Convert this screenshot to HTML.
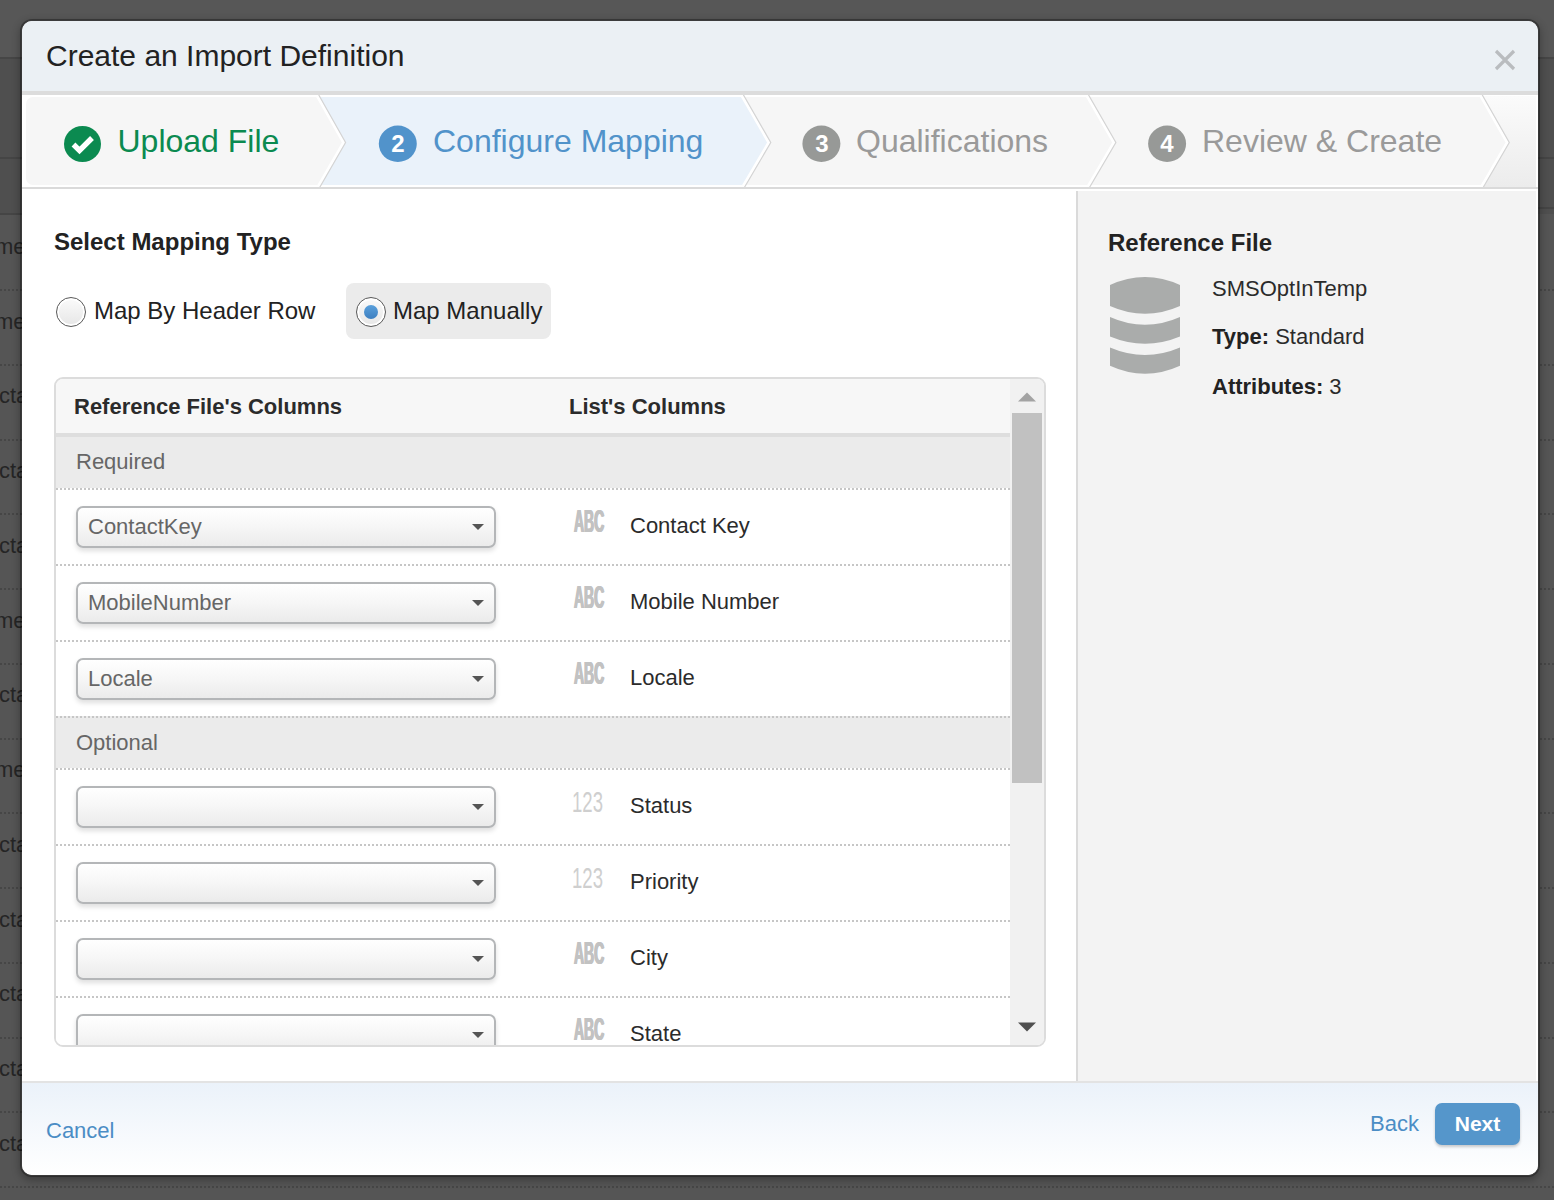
<!DOCTYPE html>
<html>
<head>
<meta charset="utf-8">
<title>Create an Import Definition</title>
<style>
*{box-sizing:border-box;margin:0;padding:0}
html,body{width:1554px;height:1200px;overflow:hidden}
body{background:#555555;font-family:"Liberation Sans",Arial,sans-serif;font-size:22px;color:#2b2b2b;position:relative}
.abs{position:absolute}
/* background page */
.bgband{position:absolute;left:0;width:1554px}
.bgline{position:absolute;left:0;width:1554px;height:0;border-top:2px dotted #464646}
.bgtxt{position:absolute;left:0;font-size:22px;color:#252525;line-height:30px;white-space:nowrap}
/* modal */
#modal{position:absolute;left:20px;top:19px;width:1520px;height:1158px;border:2px solid rgba(0,0,0,.3);border-radius:12px;background:#fff;background-clip:padding-box;box-shadow:0 3px 8px rgba(0,0,0,.3);overflow:hidden}
#hdr{position:absolute;left:0;top:0;width:1516px;height:74px;background:#ebf0f4;border-bottom:4px solid #dcdcdc}
#hdr h3{position:absolute;left:24px;top:17px;font-size:30px;font-weight:normal;line-height:36px;color:#222;white-space:nowrap}
#close{position:absolute;left:1471px;top:27px;width:24px;height:24px}
/* wizard */
#wiz{position:absolute;left:2px;top:76px;width:1512px;height:92px;background:#f6f6f6;border:2px solid #fff;border-radius:8px;overflow:hidden}
#wizline{position:absolute;left:0;top:166px;width:1516px;height:2px;background:#dcdcdc}
.step{position:absolute;top:100px;height:40px;font-size:32px;line-height:40px;white-space:nowrap}
.badge{position:absolute;width:38px;height:38px;border-radius:19px;color:#fff;font-weight:bold;font-size:24px;line-height:38px;text-align:center}
/* body */
#left{position:absolute;left:0;top:169px;width:1054px;height:891px;background:#fff}
#right{position:absolute;left:1054px;top:170px;width:460px;height:890px;background:#f3f3f3;border-left:2px solid #dadada}
h4{font-size:24px;font-weight:bold;color:#222;white-space:nowrap;position:absolute;line-height:28px}
/* footer */
#ftr{position:absolute;left:0;top:1060px;width:1516px;height:94px;background:linear-gradient(#ebf2fa,#ffffff);border-top:2px solid #e3e3e3}
a{color:#4b8dc5;text-decoration:none}

.pill{position:absolute;width:205px;height:56px;background:#ebebeb;border-radius:8px}
.radio{position:absolute;width:30px;height:30px;border-radius:15px;border:1.5px solid #5a5a5a;background:linear-gradient(#fbfbfb,#e6e6e6);box-shadow:inset 0 0 0 2px #fff}
.radio i{position:absolute;left:6.500px;top:6.500px;width:14px;height:14px;border-radius:7px;background:linear-gradient(#5aa0dc,#3d7fc0)}
.rl{position:absolute;font-size:24px;line-height:30px;color:#222;white-space:nowrap}
#grid{position:absolute;width:992px;height:670px;border:2px solid #dcdcdc;border-radius:9px;overflow:hidden;background:#fff}
#gin{position:absolute;left:0;top:0;width:988px;height:666px;overflow:hidden}
.ghead{position:absolute;left:0;top:0;width:954px;height:58px;background:#f7f7f7;border-bottom:4px solid #dedede;font-weight:bold;color:#2b2b2b}
.ghead span{position:absolute;top:13px;line-height:30px;white-space:nowrap}
.gsec{position:absolute;left:0;width:954px;background:#ebebeb;color:#666}
.gsec.opt{border-top:2px dotted #c6c6c6}
.gsec span{position:absolute;left:20px;top:10px;line-height:30px}
.gsec.opt span{top:10px}
.grow{position:absolute;left:0;width:954px;height:76px;border-top:2px dotted #c6c6c6;background:#fff}
.sel{position:absolute;left:20px;top:16px;width:420px;height:42px;border:2px solid #b4b6b8;border-radius:7px;background:linear-gradient(#ffffff,#f6f6f6 50%,#ebebeb);box-shadow:0 3px 5px rgba(0,0,0,.13);color:#666}
.sel span{position:absolute;left:10px;top:3.5px;line-height:30px;white-space:nowrap}
.sel i{position:absolute;left:394px;top:16px;width:0;height:0;border-left:6px solid transparent;border-right:6px solid transparent;border-top:6.500px solid #555}
.ic{position:absolute;left:518.2px;top:15.8px;font-size:31px;line-height:32px;font-weight:bold;color:#c2c2c2;text-shadow:1.2px 0 #c2c2c2,-1.2px 0 #c2c2c2;transform-origin:0 0;transform:scaleX(.45);white-space:nowrap}
.ic.num{font-weight:normal;color:#cfcfcf;text-shadow:none;font-size:29px;left:516px;top:15.6px;transform:scaleX(.64)}
.nm{position:absolute;left:574px;top:21px;line-height:30px;white-space:nowrap;color:#2b2b2b}
.sbar{position:absolute;left:954px;top:0;width:34px;height:666px;background:#f1f1f1}
.thumb{position:absolute;left:2px;top:34px;width:30px;height:370px;background:#c1c1c1}
.rt{position:absolute;left:134px;line-height:30px;white-space:nowrap;color:#2b2b2b}
.rt b{color:#222}
#next{position:absolute;width:85px;height:42px;border-radius:7px;background:#5596cb;color:#fff;font-weight:bold;font-size:21px;text-align:center;line-height:42px;box-shadow:0 2px 3px rgba(0,0,0,.2)}
</style>
</head>
<body>
<div class="bgband" style="top:0;height:57px;background:#575757"></div>
<div class="bgband" style="top:57px;height:157px;background:#4f4f4f"></div>
<div class="bgband" style="top:57px;height:2px;background:#464646"></div>
<div class="bgband" style="top:157px;height:2px;background:#454545"></div>
<div class="bgband" style="top:213px;height:2px;background:#454545;width:30px"></div>
<div class="bgband" style="top:207px;height:2px;background:#454545;left:1500px;width:54px"></div>
<div class="bgline" style="top:289.00px"></div>
<div class="bgline" style="top:363.75px"></div>
<div class="bgline" style="top:438.50px"></div>
<div class="bgline" style="top:513.25px"></div>
<div class="bgline" style="top:588.00px"></div>
<div class="bgline" style="top:662.75px"></div>
<div class="bgline" style="top:737.50px"></div>
<div class="bgline" style="top:812.25px"></div>
<div class="bgline" style="top:887.00px"></div>
<div class="bgline" style="top:961.75px"></div>
<div class="bgline" style="top:1036.50px"></div>
<div class="bgline" style="top:1111.25px"></div>
<div class="bgline" style="top:1186.00px"></div>
<div class="bgtxt" style="left:-5px;top:231.90px">me</div>
<div class="bgtxt" style="left:-5px;top:306.65px">me</div>
<div class="bgtxt" style="left:-1px;top:381.40px">cta</div>
<div class="bgtxt" style="left:-1px;top:456.15px">cta</div>
<div class="bgtxt" style="left:-1px;top:530.90px">cta</div>
<div class="bgtxt" style="left:-5px;top:605.65px">me</div>
<div class="bgtxt" style="left:-1px;top:680.40px">cta</div>
<div class="bgtxt" style="left:-5px;top:755.15px">me</div>
<div class="bgtxt" style="left:-1px;top:829.90px">cta</div>
<div class="bgtxt" style="left:-1px;top:904.65px">cta</div>
<div class="bgtxt" style="left:-1px;top:979.40px">cta</div>
<div class="bgtxt" style="left:-1px;top:1054.15px">cta</div>
<div class="bgtxt" style="left:-1px;top:1128.90px">cta</div>
<div id="modal">
  <div id="hdr"><h3>Create an Import Definition</h3>
    <svg id="close" viewBox="0 0 24 24"><path d="M3 3L21 21M21 3L3 21" stroke="#b9bcbf" stroke-width="3.2" fill="none"/></svg>
  </div>
  <svg class="abs" style="left:0;top:74px" width="1516" height="96" viewBox="0 0 1516 96">
    <defs><linearGradient id="gr" x1="0" y1="0" x2="0" y2="1"><stop offset="0" stop-color="#fbfbfb"/><stop offset="1" stop-color="#ececec"/></linearGradient>
    <clipPath id="cp"><rect x="0" y="0" width="1516" height="94"/></clipPath></defs>
    <rect x="0" y="0" width="1516" height="92" fill="#fff"/>
    <rect x="4" y="2" width="1510" height="88" rx="7" fill="#f6f6f6"/>
    <rect x="1440" y="1" width="74" height="91" fill="url(#gr)"/>
    <polygon points="1400,0 1459,0 1486,47.5 1459,92 1400,92" fill="#fff"/><polygon points="1400,2 1459,2 1486,47.5 1459,90 1400,90" fill="#f6f6f6"/>
    <polygon points="296,2 721,2 748,47.5 721,90 296,90 322.5,47.5" fill="#eaf2fa"/>
    <g clip-path="url(#cp)">
    <g fill="none" stroke="#d4d4d4" stroke-width="1.7">
      <polyline points="296.5,0 323.3,47.5 296.5,94"/>
      <polyline points="721.2,0 748.5,47.5 721.2,94"/>
      <polyline points="1066.3,0 1093.6,47.5 1066.3,94"/>
      <polyline points="1460.0,0 1487.0,47.5 1460.0,94"/>
    </g>
    <g fill="none" stroke="#ffffff" stroke-width="2.6">
      <polyline points="294.6,0 321.4,47.5 294.6,94"/>
      <polyline points="719.3,0 746.6,47.5 719.3,94"/>
      <polyline points="1064.4,0 1091.7,47.5 1064.4,94"/>
      <polyline points="1458.1,0 1485.1,47.5 1458.1,94"/>
    </g>
    </g>
    <rect x="0" y="92" width="1516" height="2" fill="#dadada"/>
    <ellipse cx="60.500" cy="49" rx="18.500" ry="18" fill="#0b8a50"/>
    <path d="M51.500 49.500 L57.500 55.500 L70 43" fill="none" stroke="#fff" stroke-width="5.400"/>
    <ellipse cx="375.800" cy="48.800" rx="19" ry="18.200" fill="#5193cb"/>
    <ellipse cx="799.400" cy="48.800" rx="19" ry="18.200" fill="#979997"/>
    <ellipse cx="1145.100" cy="48.800" rx="19" ry="18.200" fill="#979997"/>
  </svg>
  <div class="badge" style="left:357px;top:104px">2</div>
  <div class="badge" style="left:781px;top:104px">3</div>
  <div class="badge" style="left:1126px;top:104px">4</div>
  <div class="step" style="left:95.500px;color:#0b8a50">Upload File</div>
  <div class="step" style="left:411px;color:#5193ca">Configure Mapping</div>
  <div class="step" style="left:834px;color:#9a9a9a">Qualifications</div>
  <div class="step" style="left:1180px;color:#9a9a9a">Review &amp; Create</div>
  <div id="left">
    <h4 style="left:32px;top:38px">Select Mapping Type</h4>
    <div class="pill" style="left:324px;top:93px"></div>
    <div class="radio" style="left:34px;top:107px"></div>
    <div class="radio" style="left:334px;top:107px"><i></i></div>
    <div class="rl" style="left:72px;top:106px">Map By Header Row</div>
    <div class="rl" style="left:371px;top:106px">Map Manually</div>
    <div id="grid" style="left:32px;top:187px"><div id="gin">
            <div class="ghead"><span style="left:18px">Reference File's Columns</span><span style="left:513px">List's Columns</span></div>
      <div class="gsec" style="top:58px;height:52px"><span>Required</span></div>
      <div class="grow" style="top:109px"><div class="sel"><span>ContactKey</span><i></i></div><b class="ic abc">ABC</b><span class="nm">Contact Key</span></div>
      <div class="grow" style="top:185px"><div class="sel"><span>MobileNumber</span><i></i></div><b class="ic abc">ABC</b><span class="nm">Mobile Number</span></div>
      <div class="grow" style="top:261px"><div class="sel"><span>Locale</span><i></i></div><b class="ic abc">ABC</b><span class="nm">Locale</span></div>
      <div class="gsec opt" style="top:337px;height:54px"><span>Optional</span></div>
      <div class="grow" style="top:389px"><div class="sel"><span></span><i></i></div><b class="ic num">123</b><span class="nm">Status</span></div>
      <div class="grow" style="top:465px"><div class="sel"><span></span><i></i></div><b class="ic num">123</b><span class="nm">Priority</span></div>
      <div class="grow" style="top:541px"><div class="sel"><span></span><i></i></div><b class="ic abc">ABC</b><span class="nm">City</span></div>
      <div class="grow" style="top:617px"><div class="sel"><span></span><i></i></div><b class="ic abc">ABC</b><span class="nm">State</span></div>
      <div class="sbar"><div class="thumb"></div><svg class="abs" style="left:8px;top:13px" width="18" height="10"><path d="M0 9.500L9 0.500L18 9.500Z" fill="#a3a3a3"/></svg><svg class="abs" style="left:8px;top:643px" width="18" height="10"><path d="M0 0.500L9 9.500L18 0.500Z" fill="#505050"/></svg></div>
    </div></div>
</div>
  <div id="right">
    <h4 style="left:30px;top:38px">Reference File</h4>
    <svg class="abs" style="left:32px;top:86px" width="70" height="98" viewBox="0 0 70 98"><g fill="#aaacab">
      <path d="M0 8Q35 -8 70 8V29Q35 44.600 0 29Z"/>
      <path d="M0 40Q35 55.600 70 40V59.500Q35 74 0 59.500Z"/>
      <path d="M0 70.400Q35 85.400 70 70.400V88.700Q35 104.700 0 88.700Z"/></g></svg>
    <div class="rt" style="top:82.5px">SMSOptInTemp</div>
    <div class="rt" style="top:130.5px"><b>Type:</b> Standard</div>
    <div class="rt" style="top:180.5px"><b>Attributes:</b> 3</div>
</div>
  <div id="ftr">
    <a class="abs" style="left:24px;top:33px;line-height:30px">Cancel</a>
    <a class="abs" style="left:1348px;top:26px;line-height:30px">Back</a>
    <div id="next" style="left:1413px;top:20px">Next</div>
</div>
</div>
</body>
</html>
